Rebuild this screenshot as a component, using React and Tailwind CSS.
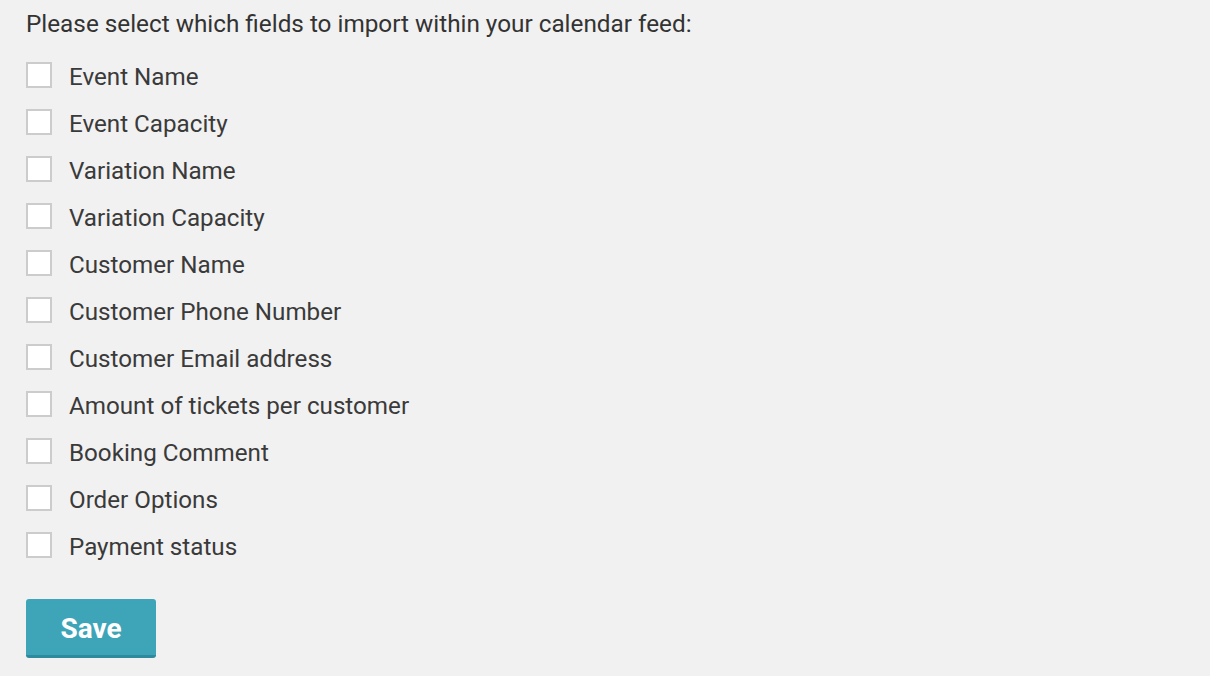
import React from "react";

const fields = [
  "Event Name",
  "Event Capacity",
  "Variation Name",
  "Variation Capacity",
  "Customer Name",
  "Customer Phone Number",
  "Customer Email address",
  "Amount of tickets per customer",
  "Booking Comment",
  "Order Options",
  "Payment status",
];

export default function App() {
  return (
    <div
      className="w-[1210px] h-[676px] bg-[#f1f1f1] text-[#444444] overflow-hidden pl-[26px] pt-[10px]"
      style={{ fontFamily: "Roboto, 'Liberation Sans', sans-serif" }}
    >
      <p className="text-[24.3px] leading-[28px] text-[#333333]">
        Please select which fields to import within your calendar feed:
      </p>
      <div className="mt-[24px] flex flex-col gap-[21px]">
        {fields.map((f) => (
          <label key={f} className="flex items-center h-[26px]">
            <span className="w-[26px] h-[26px] border-[2px] border-[#cccccc] bg-white shrink-0" />
            <span className="ml-[17px] pt-[4px] text-[24.2px] leading-[26px] text-[#3a3a3a] whitespace-nowrap">{f}</span>
          </label>
        ))}
      </div>
      <button className="mt-[41px] w-[130px] h-[59px] pt-[3px] bg-[#3ea5b9] border-b-[3px] border-[#2e8a9c] rounded-[3px] text-white font-bold text-[28px] leading-none">
        Save
      </button>
    </div>
  );
}
